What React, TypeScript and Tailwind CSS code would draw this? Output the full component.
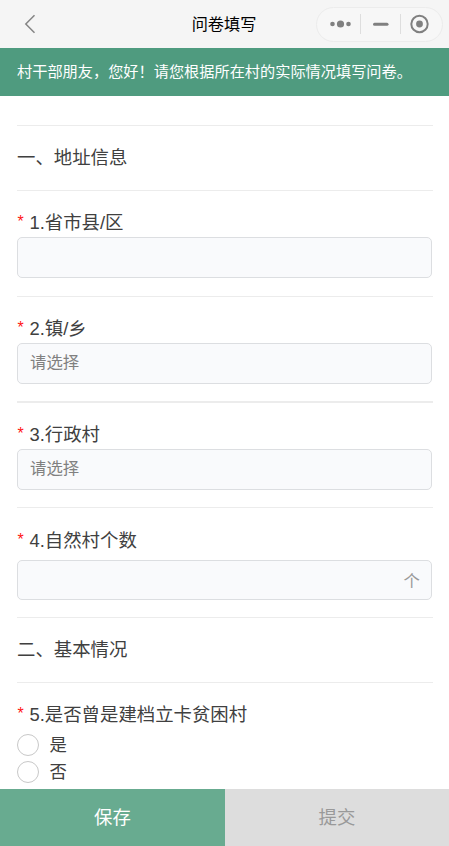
import type { ReactNode } from 'react';

interface QuestionProps {
  label: string;
  className?: string;
  children: ReactNode;
}

function SectionTitle({ children }: { children: ReactNode }) {
  return (
    <h2 className="h-[65px] border-t border-[#ececec] text-[18.4px] leading-[64px]">{children}</h2>
  );
}

function Question({ label, className = 'border-t pt-[18px] pb-[17px]', children }: QuestionProps) {
  return (
    <div className={`border-[#ececec] ${className}`}>
      <div className="flex h-7 text-[18.4px] leading-[28px]">
        <span className="w-[12.5px] pl-[0.5px] text-[16px] leading-[25px] text-[#ff1414]">*</span>
        <span>{label}</span>
      </div>
      {children}
    </div>
  );
}

function Field({ placeholder = '', unit = '', className = 'h-[41px]' }) {
  return (
    <div
      className={`mr-px flex items-center justify-between rounded-[5px] border border-[#dcdee1] bg-[#f9fafc] pr-[11px] pl-3 text-[16.4px] ${className}`}
    >
      <span className="-mt-0.5 text-[#808080]">{placeholder}</span>
      <span className="mt-[3px] text-[#999]">{unit}</span>
    </div>
  );
}

function Option({ label }: { label: string }) {
  return (
    <div className="flex h-[27px] items-center gap-[10.5px] text-[17.4px]">
      <span className="size-[22px] rounded-full border border-[#c8c8c8] bg-white" />
      <span className="mt-0.5">{label}</span>
    </div>
  );
}

export default function App() {
  return (
    <div className="flex h-[846px] w-[449px] flex-col overflow-hidden bg-white font-['Liberation_Sans','Noto_Sans_CJK_SC',sans-serif] text-[#404040]">
      <header className="grid h-12 shrink-0 grid-cols-[1fr_auto_1fr] items-center bg-[#f5f5f5]">
        <svg className="ml-6" width="12" height="20" viewBox="0 0 12 20" fill="none" stroke="#858585" strokeWidth="1.5">
          <path d="M10.5 1.2 1.8 10l8.7 8.8" />
        </svg>
        <h1 className="-ml-px text-[16.2px] leading-6 text-black">问卷填写</h1>
        <div className="mr-1.5 flex h-[35px] w-[127px] items-center justify-self-end rounded-full border-[1.5px] border-[#ececec] bg-[#f7f7f7]">
          <svg width="124" height="32" viewBox="0 0 124 32" fill="#808080">
            <circle cx="15.5" cy="16" r="2.3" />
            <circle cx="23.5" cy="16" r="3.6" />
            <circle cx="31.5" cy="16" r="2.3" />
            <path d="M43.5 6v20M83.5 6v20" stroke="#dedede" />
            <path d="M57.5 16.3h12.5" stroke="#808080" strokeWidth="3" strokeLinecap="round" />
            <circle cx="102.5" cy="16" r="8.2" fill="none" stroke="#808080" strokeWidth="2" />
            <circle cx="102.5" cy="16" r="3.4" />
          </svg>
        </div>
      </header>

      <p className="h-12 shrink-0 bg-[#4f9b7f] px-[17px] text-[15.2px] leading-[47px] whitespace-nowrap text-white">
        村干部朋友，您好！请您根据所在村的实际情况填写问卷。
      </p>

      <main className="min-h-0 flex-1 overflow-hidden pt-[29px] pr-4 pl-[17px]">
        <SectionTitle>一、地址信息</SectionTitle>
        <Question label="1.省市县/区" className="border-t pt-[18px] pb-[18px]">
          <Field />
        </Question>
        <Question label="2.镇/乡">
          <Field placeholder="请选择" />
        </Question>
        <Question label="3.行政村" className="border-t-2 pt-[18px] pb-[17px]">
          <Field placeholder="请选择" />
        </Question>
        <Question label="4.自然村个数" className="border-t pt-[19px] pb-[17px]">
          <Field unit="个" className="mt-[5px] h-10" />
        </Question>
        <SectionTitle>二、基本情况</SectionTitle>
        <Question label="5.是否曾是建档立卡贫困村" className="border-t pt-[18px]">
          <div className="pt-0.5">
            <Option label="是" />
            <Option label="否" />
          </div>
        </Question>
      </main>

      <footer className="flex h-[57px] shrink-0 text-[18.4px]">
        <button className="w-[225px] bg-[#68ab90] text-white">保存</button>
        <button className="flex-1 bg-[#dddddd] text-[#999]">提交</button>
      </footer>
    </div>
  );
}
